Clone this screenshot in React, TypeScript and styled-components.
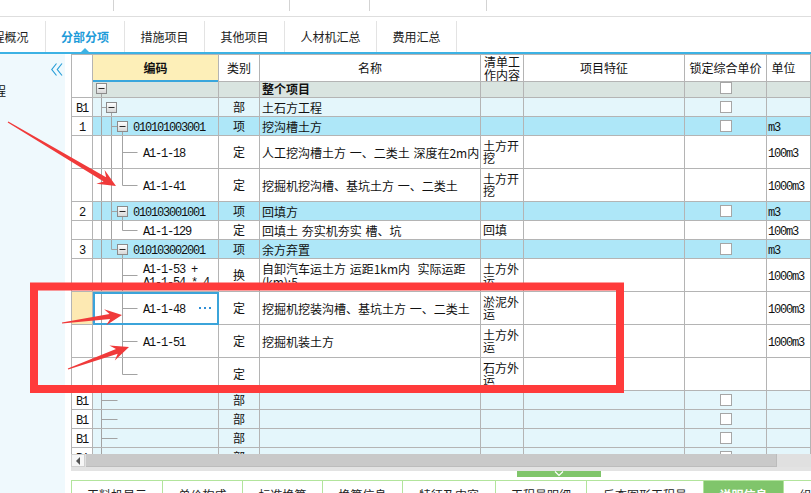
import React from "react";
import styled, { createGlobalStyle, css } from "styled-components";

type Kind = "root" | "bu" | "item" | "leaf";

// which tree guides a row draws in the 编码 column
type Tree = {
  through?: number[];
  upper?: number;
  lower?: number;
  box?: number;
  branch?: number;
};

type Row = {
  no?: string;
  kind: Kind;
  code?: string[];
  type?: string;
  name?: string[];
  content?: string;
  unit?: string;
  check?: boolean;
  tall?: boolean;
  selected?: boolean;
  tree: Tree;
};

const rows: Row[] = [
  { kind: "root", name: ["整个项目"], check: true, tree: { box: 0, lower: 0 } },
  { no: "B1", kind: "bu", type: "部", name: ["土石方工程"], check: true, tree: { through: [0], box: 1, lower: 1 } },
  {
    no: "1",
    kind: "item",
    code: ["010101003001"],
    type: "项",
    name: ["挖沟槽土方"],
    check: true,
    unit: "m3",
    tree: { through: [0, 1], box: 2, lower: 2 },
  },
  {
    kind: "leaf",
    code: ["A1-1-18"],
    type: "定",
    name: ["人工挖沟槽土方 一、二类土 深度在2m内"],
    content: "土方开挖",
    unit: "100m3",
    tall: true,
    tree: { through: [0, 1, 2], branch: 2 },
  },
  {
    kind: "leaf",
    code: ["A1-1-41"],
    type: "定",
    name: ["挖掘机挖沟槽、基坑土方 一、二类土"],
    content: "土方开挖",
    unit: "1000m3",
    tall: true,
    tree: { through: [0, 1], upper: 2, branch: 2 },
  },
  {
    no: "2",
    kind: "item",
    code: ["010103001001"],
    type: "项",
    name: ["回填方"],
    check: true,
    unit: "m3",
    tree: { through: [0, 1], box: 2, lower: 2 },
  },
  {
    kind: "leaf",
    code: ["A1-1-129"],
    type: "定",
    name: ["回填土 夯实机夯实 槽、坑"],
    content: "回填",
    unit: "100m3",
    tree: { through: [0, 1], upper: 2, branch: 2 },
  },
  {
    no: "3",
    kind: "item",
    code: ["010103002001"],
    type: "项",
    name: ["余方弃置"],
    check: true,
    unit: "m3",
    tree: { through: [0], upper: 1, box: 2, lower: 2 },
  },
  {
    kind: "leaf",
    code: ["A1-1-53 +", "A1-1-54 * 4"],
    type: "换",
    name: ["自卸汽车运土方 运距1km内  实际运距", "(km):5"],
    content: "土方外运",
    unit: "1000m3",
    tall: true,
    tree: { through: [0, 2], branch: 2 },
  },
  {
    kind: "leaf",
    code: ["A1-1-48"],
    type: "定",
    name: ["挖掘机挖装沟槽、基坑土方 一、二类土"],
    content: "淤泥外运",
    unit: "1000m3",
    tall: true,
    selected: true,
    tree: { through: [0, 2], branch: 2 },
  },
  {
    kind: "leaf",
    code: ["A1-1-51"],
    type: "定",
    name: ["挖掘机装土方"],
    content: "土方外运",
    unit: "1000m3",
    tall: true,
    tree: { through: [0, 2], branch: 2 },
  },
  { kind: "leaf", type: "定", content: "石方外运", tall: true, tree: { through: [0], upper: 2, branch: 2 } },
  { no: "B1", kind: "bu", type: "部", check: true, tree: { through: [0], branch: 0 } },
  { no: "B1", kind: "bu", type: "部", check: true, tree: { through: [0], branch: 0 } },
  { no: "B1", kind: "bu", type: "部", check: true, tree: { through: [0], branch: 0 } },
  { no: "B1", kind: "bu", type: "部", check: true, tree: { through: [0], branch: 0 } },
];

const topTabs = [
  { label: "工程概况", w: 82 },
  { label: "分部分项", w: 79, active: true },
  { label: "措施项目", w: 80 },
  { label: "其他项目", w: 80 },
  { label: "人材机汇总", w: 92 },
  { label: "费用汇总", w: 80 },
];

const bottomTabs = [
  { label: "工料机显示", w: 91 },
  { label: "单价构成", w: 80 },
  { label: "标准换算", w: 80 },
  { label: "换算信息", w: 80 },
  { label: "特征及内容", w: 93 },
  { label: "工程量明细", w: 91 },
  { label: "反查图形工程量", w: 117 },
  { label: "说明信息", w: 80, active: true },
  { label: "组价方案", w: 80 },
];

const ROW_BG: Record<Kind, string> = {
  root: "#d9e4e0",
  bu: "#e4f6fb",
  item: "#aee7f8",
  leaf: "#ffffff",
};

const GUIDE_X = [8.5, 18.5, 29.5];
const GUIDE = "#a3a3a3";

function TreeGuide({ tree, width, height }: { tree: Tree; width: number; height: number }) {
  const mid = Math.floor(height / 2) + 0.5;
  const parts: React.ReactNode[] = [];

  (tree.through ?? []).forEach(l =>
    parts.push(<line key={"t" + l} x1={GUIDE_X[l]} x2={GUIDE_X[l]} y1={0} y2={height} stroke={GUIDE} />)
  );
  if (tree.upper !== undefined) {
    const x = GUIDE_X[tree.upper];
    parts.push(<line key="u" x1={x} x2={x} y1={0} y2={mid} stroke={GUIDE} />);
  }
  if (tree.lower !== undefined) {
    const x = GUIDE_X[tree.lower];
    parts.push(<line key="l" x1={x} x2={x} y1={mid} y2={height} stroke={GUIDE} />);
  }
  if (tree.branch !== undefined) {
    const x = GUIDE_X[tree.branch];
    parts.push(<line key="b" x1={x} x2={x + (tree.branch === 0 ? 16 : 15)} y1={mid} y2={mid} stroke={GUIDE} />);
  }
  if (tree.box !== undefined) {
    const x = GUIDE_X[tree.box];
    if (tree.box > 0) {
      parts.push(<line key="c" x1={GUIDE_X[tree.box - 1]} x2={x - 5} y1={mid} y2={mid} stroke={GUIDE} />);
    }
    parts.push(
      <rect key="r" x={x - 5} y={mid - 5} width={10} height={10} fill="url(#toggleFill)" stroke="#8b8b8b" />,
      <line key="m" x1={x - 3} x2={x + 3} y1={mid} y2={mid} stroke="#2a2a2a" />
    );
  }

  return (
    <GuideSvg width={width} height={height}>
      <defs>
        <linearGradient id="toggleFill" x1="0" y1="0" x2="0" y2="1">
          <stop offset="0" stopColor="#ffffff" />
          <stop offset="1" stopColor="#d6d6d6" />
        </linearGradient>
      </defs>
      {parts}
    </GuideSvg>
  );
}

function arrowShape(tail: [number, number], tip: [number, number], head = 17, barb = 8, neck = 5) {
  const [tx, ty] = tail;
  const [hx, hy] = tip;
  const len = Math.hypot(hx - tx, hy - ty);
  const ux = (hx - tx) / len;
  const uy = (hy - ty) / len;
  const nx = -uy;
  const ny = ux;
  const jx = hx - ux * head * 0.72;
  const jy = hy - uy * head * 0.72;
  const bx = hx - ux * head;
  const by = hy - uy * head;
  const pts = [
    [tx + nx * 0.6, ty + ny * 0.6],
    [jx + (nx * neck) / 2, jy + (ny * neck) / 2],
    [bx + nx * barb, by + ny * barb],
    [hx, hy],
    [bx - nx * barb, by - ny * barb],
    [jx - (nx * neck) / 2, jy - (ny * neck) / 2],
    [tx - nx * 0.6, ty - ny * 0.6],
  ];
  return pts.map(([x, y]) => `${x.toFixed(1)},${y.toFixed(1)}`).join(" ");
}

export default function App() {
  return (
    <>
      <GlobalStyle />
      <Screen>
        <TopStrip>
          <StripCell $w={114} />
          <StripCell $w={176} />
          <StripCell $w={80} />
          <StripCell $w={117} />
          <StripCell $last />
        </TopStrip>

        <TabBar>
          {topTabs.map(t => (
            <Tab key={t.label} $w={t.w} $active={t.active}>
              {t.label}
            </Tab>
          ))}
        </TabBar>

        <Body>
          <SidePanel>
            <CollapseIcon width="12" height="13" viewBox="0 0 12 13">
              <polyline points="5.5,0.5 0.8,6.5 5.5,12.5" fill="none" stroke="#2a9fd8" strokeWidth="1.2" />
              <polyline points="11,0.5 6.3,6.5 11,12.5" fill="none" stroke="#2a9fd8" strokeWidth="1.2" />
            </CollapseIcon>
            <SideTitle>程</SideTitle>
          </SidePanel>

          <Main>
            <Grid>
              <HeaderRow>
                <HeadCell />
                <HeadCell $code>编码</HeadCell>
                <HeadCell>类别</HeadCell>
                <HeadCell>名称</HeadCell>
                <HeadCell $stack>
                  清单工
                  <br />
                  作内容
                </HeadCell>
                <HeadCell>项目特征</HeadCell>
                <HeadCell>锁定综合单价</HeadCell>
                <HeadCell $unit>单位</HeadCell>
              </HeaderRow>

              {rows.map((r, i) => {
                const h = r.tall ? 32 : 18;
                const guideW = r.kind === "item" ? 40 : 50;
                return (
                  <GridRow key={i} $kind={r.kind} $tall={r.tall}>
                    <NoCell $selected={r.selected}>{r.no}</NoCell>
                    <CodeCell $selected={r.selected}>
                      <TreeGuide tree={r.tree} width={guideW} height={h} />
                      {r.code && (
                        <CodeText>
                          {r.code.map((c, j) => (
                            <div key={j}>{c}</div>
                          ))}
                        </CodeText>
                      )}
                      {r.selected && (
                        <MoreDots>
                          <i />
                          <i />
                          <i />
                        </MoreDots>
                      )}
                    </CodeCell>
                    <TypeCell>{r.type}</TypeCell>
                    <NameCell $bold={r.kind === "root"}>
                      <div>
                        {r.name?.map((n, j) => (
                          <div key={j}>{n}</div>
                        ))}
                      </div>
                    </NameCell>
                    <ContentCell>{r.content}</ContentCell>
                    <Cell />
                    <LockCell>{r.check && <CheckBox />}</LockCell>
                    <UnitCell>{r.unit}</UnitCell>
                  </GridRow>
                );
              })}
            </Grid>

            <HScroll>
              <ScrollButton>
                <LeftTri />
              </ScrollButton>
              <ScrollThumb />
            </HScroll>
            <ScrollFoot />
            <Splitter>
              <SplitHandle>
                <svg width="10" height="6" viewBox="0 0 10 6">
                  <polyline points="1,0.5 5,4.5 9,0.5" fill="none" stroke="#ffffff" strokeWidth="1.2" />
                </svg>
              </SplitHandle>
            </Splitter>

            <BottomTabs>
              {bottomTabs.map(t => (
                <BottomTab key={t.label} $w={t.w} $active={t.active}>
                  {t.label}
                </BottomTab>
              ))}
            </BottomTabs>
          </Main>
        </Body>

        <Overlay width="811" height="493" viewBox="0 0 811 493">
          <rect x="34" y="286.5" width="586" height="102.5" fill="none" stroke="#ff3b3b" strokeWidth="8" />
          <polygon points={arrowShape([8, 122], [116, 186], 18, 8, 5)} fill="#f03a3a" />
          <polygon points={arrowShape([62, 323], [122, 315], 17, 8, 5)} fill="#f03a3a" />
          <polygon points={arrowShape([68, 369], [129, 347], 18, 8, 5)} fill="#f03a3a" />
        </Overlay>
      </Screen>
    </>
  );
}

const GlobalStyle = createGlobalStyle`
  html, body {
    margin: 0;
    padding: 0;
    background: #fff;
  }

  body {
    font-family: "Noto Sans CJK SC", "Noto Sans", sans-serif;
    font-size: 12px;
    color: #111;
    overflow: hidden;
  }
`;

const Screen = styled.div`
  position: relative;
  width: 811px;
  height: 493px;
  overflow: hidden;
  background: #fff;
`;

const TopStrip = styled.div`
  display: flex;
  height: 16px;
  border-bottom: 1px solid #dedede;
`;

const StripCell = styled.div<{ $w?: number; $last?: boolean }>`
  box-sizing: border-box;
  height: 11px;
  flex: ${p => (p.$w ? `0 0 ${p.$w}px` : "1")};
  border-right: ${p => (p.$last ? "0" : "1px solid #d3d3d3")};
`;

const TabBar = styled.div`
  display: flex;
  align-items: flex-end;
  height: 35px;
  margin-left: -36px;
  border-bottom: 2px solid #3cb2e4;
`;

const Tab = styled.div<{ $w: number; $active?: boolean }>`
  position: relative;
  box-sizing: border-box;
  flex: 0 0 ${p => p.$w}px;
  height: 31px;
  display: flex;
  align-items: center;
  justify-content: center;
  border-right: 1px solid #e3e3e3;
  font-size: 12px;
  color: ${p => (p.$active ? "#1d9bd9" : "#222")};
  font-weight: ${p => (p.$active ? 700 : 400)};

  ${p =>
    p.$active &&
    css`
      &::after {
        content: "";
        position: absolute;
        left: 50%;
        bottom: 0;
        margin-left: -4px;
        border-left: 4px solid transparent;
        border-right: 4px solid transparent;
        border-bottom: 4px solid #3cb2e4;
      }
    `}
`;

const Body = styled.div`
  display: flex;
  gap: 6px;
  height: 439px;
  overflow: hidden;
`;

const SidePanel = styled.aside`
  flex: 0 0 65px;
  display: flex;
  flex-direction: column;
  background: #eff9fd;
  overflow: hidden;
`;

const CollapseIcon = styled.svg`
  align-self: flex-end;
  margin: 9px 2px 0 0;
`;

const SideTitle = styled.div`
  margin: 8px 0 0 -6px;
  font-size: 12px;
  line-height: 14px;
  color: #111;
`;

const Main = styled.div`
  flex: 1;
  min-width: 0;
  display: flex;
  flex-direction: column;
`;

const Grid = styled.div`
  flex: none;
  height: 400px;
  box-sizing: border-box;
  overflow: hidden;
  border-top: 1px solid #b4b4b4;
  border-left: 1px solid #b4b4b4;
`;

const COLUMNS = "21px 126px 41px 221px 43px 161px 82px 1fr";

const HeaderRow = styled.div`
  display: grid;
  grid-template-columns: ${COLUMNS};
  height: 24px;
`;

const HeadCell = styled.div<{ $code?: boolean; $stack?: boolean; $unit?: boolean }>`
  box-sizing: border-box;
  display: flex;
  align-items: center;
  justify-content: center;
  text-align: center;
  overflow: visible;
  border-right: 1px solid #b4b4b4;
  border-bottom: ${p => (p.$code ? "2px solid #3aa6dc" : "1px solid #b4b4b4")};
  background: ${p => (p.$code ? "#fdefb8" : "#fff")};
  font-weight: ${p => (p.$code ? 700 : 400)};
  line-height: ${p => (p.$stack ? "13px" : "14px")};
  padding-right: ${p => (p.$unit ? "10px" : "0")};
  white-space: nowrap;
`;

const GridRow = styled.div<{ $kind: Kind; $tall?: boolean }>`
  display: grid;
  grid-template-columns: ${COLUMNS};
  height: ${p => (p.$tall ? 33 : 19)}px;
  background: ${p => ROW_BG[p.$kind]};
`;

const Cell = styled.div`
  box-sizing: border-box;
  display: flex;
  align-items: center;
  min-width: 0;
  overflow: hidden;
  border-right: 1px solid #b4b4b4;
  border-bottom: 1px solid #b4b4b4;
`;

// the bitmap-like latin text sits a little low in its line; padding-top nudges it down
const MONO = css`
  font-family: "Liberation Mono", "DejaVu Sans Mono", monospace;
  font-size: 12px;
  letter-spacing: -1.2px;
  line-height: 13px;
  padding-top: 4px;
  color: #111;
`;

const NoCell = styled(Cell)<{ $selected?: boolean }>`
  ${MONO};
  justify-content: center;
  background: ${p => (p.$selected ? "#fde9b2" : "#fff")};
`;

const CodeCell = styled(Cell)<{ $selected?: boolean }>`
  overflow: visible;
  ${p =>
    p.$selected &&
    css`
      outline: 2px solid #3ba4da;
      outline-offset: -2px;
    `}
`;

const GuideSvg = styled.svg`
  flex: none;
  align-self: flex-start;
  display: block;
`;

const CodeText = styled.div`
  ${MONO};
  white-space: pre;
`;

const MoreDots = styled.div`
  display: flex;
  gap: 3px;
  margin: 0 7px 0 auto;

  i {
    width: 2px;
    height: 2px;
    background: #2f8fd6;
  }
`;

const TypeCell = styled(Cell)`
  justify-content: center;
  line-height: 14px;
`;

const NameCell = styled(Cell)<{ $bold?: boolean }>`
  padding-left: 2px;
  white-space: pre;
  word-spacing: 1px;
  line-height: 13px;
  font-weight: ${p => (p.$bold ? 700 : 400)};
`;

const ContentCell = styled(Cell)`
  padding-left: 2px;
  line-height: 12px;
  word-break: break-all;
`;

const LockCell = styled(Cell)`
  justify-content: center;
`;

const CheckBox = styled.span`
  box-sizing: border-box;
  width: 12px;
  height: 12px;
  margin-left: 1px;
  border: 1px solid #a6a6a6;
  background: #fff;
`;

const UnitCell = styled(Cell)`
  ${MONO};
  padding-left: 1px;
`;

const HScroll = styled.div`
  flex: none;
  display: flex;
  height: 13px;
  background: #e0e0e0;
`;

const ScrollButton = styled.div`
  box-sizing: border-box;
  flex: 0 0 14px;
  display: flex;
  align-items: center;
  justify-content: center;
  background: #f6f6f6;
  border: 1px solid #d0d0d0;
`;

const LeftTri = styled.span`
  width: 0;
  height: 0;
  border-top: 4px solid transparent;
  border-bottom: 4px solid transparent;
  border-right: 4px solid #555;
`;

const ScrollThumb = styled.div`
  box-sizing: border-box;
  flex: 0 0 691px;
  margin-left: 1px;
  background: #c9c9c9;
  border-right: 1px solid #bcbcbc;
  border-bottom: 1px solid #bcbcbc;
`;

const ScrollFoot = styled.div`
  flex: none;
  height: 4px;
  background: #e3e3e3;
`;

const Splitter = styled.div`
  flex: none;
  height: 9px;
  background: #fff;
`;

const SplitHandle = styled.div`
  width: 84px;
  height: 6px;
  margin-left: 446px;
  display: flex;
  align-items: center;
  justify-content: center;
  background: #80c56b;
`;

const BottomTabs = styled.div`
  flex: none;
  display: flex;
  height: 30px;
  border-top: 1px solid #b2e49c;
  border-left: 1px solid #b2e49c;
`;

const BottomTab = styled.div<{ $w: number; $active?: boolean }>`
  box-sizing: border-box;
  flex: 0 0 ${p => p.$w}px;
  height: 26px;
  display: flex;
  align-items: center;
  justify-content: center;
  border-right: 1px solid #b2e49c;
  background: ${p => (p.$active ? "#80c56b" : "#fff")};
  color: ${p => (p.$active ? "#fff" : "#222")};
  font-weight: ${p => (p.$active ? 700 : 400)};
  font-size: 12px;
  white-space: nowrap;
`;

const Overlay = styled.svg`
  position: absolute;
  left: 0;
  top: 0;
  pointer-events: none;
`;
